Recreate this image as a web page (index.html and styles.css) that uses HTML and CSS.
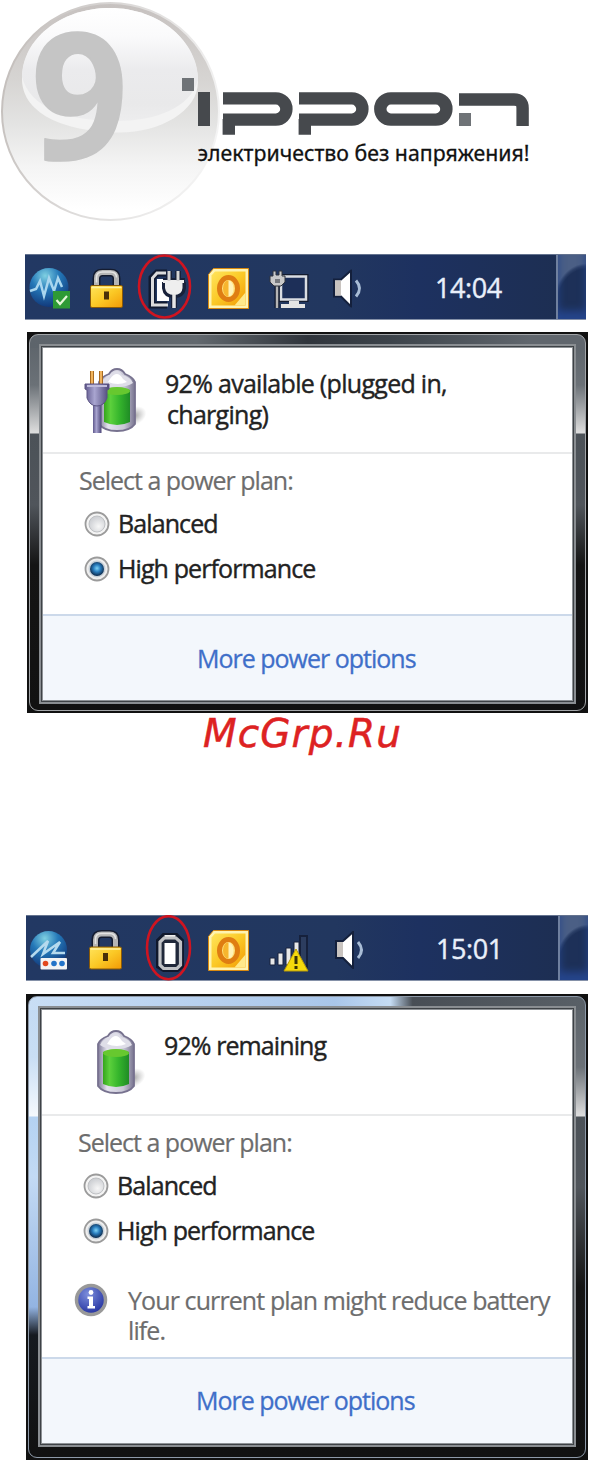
FILE: index.html
```
<!DOCTYPE html>
<html lang="en">
<head>
    <meta charset="UTF-8">
    <title>Ippon - Power plan</title>
    <link rel="stylesheet" href="styles.css">
</head>
<body>
    <!-- shared icons -->
    <svg class="sprites" width="0" height="0">
        <defs>
            <linearGradient id="gold" x1="0" y1="0" x2="1" y2="1">
                <stop offset="0" stop-color="#ffe45c"/>
                <stop offset="0.5" stop-color="#fbc926"/>
                <stop offset="1" stop-color="#f29a05"/>
            </linearGradient>
            <radialGradient id="globe" cx="0.4" cy="0.2" r="0.8">
                <stop offset="0" stop-color="#7fd0e2"/>
                <stop offset="0.45" stop-color="#2478b8"/>
                <stop offset="1" stop-color="#123a7c"/>
            </radialGradient>
            <linearGradient id="glass">
                <stop offset="0" stop-color="#7d7896"/>
                <stop offset="0.25" stop-color="#e4e3ee"/>
                <stop offset="0.7" stop-color="#c9c8d6"/>
                <stop offset="1" stop-color="#77738f"/>
            </linearGradient>
            <linearGradient id="green">
                <stop offset="0" stop-color="#35a51c"/>
                <stop offset="0.25" stop-color="#5cd03c"/>
                <stop offset="0.6" stop-color="#35b52c"/>
                <stop offset="1" stop-color="#1f8c25"/>
            </linearGradient>
            <linearGradient id="plug">
                <stop offset="0" stop-color="#5f588c"/>
                <stop offset="0.4" stop-color="#a9a5d0"/>
                <stop offset="1" stop-color="#4c4678"/>
            </linearGradient>
            <radialGradient id="shade">
                <stop offset="0" stop-color="#777" stop-opacity="0.7"/>
                <stop offset="1" stop-color="#999" stop-opacity="0"/>
            </radialGradient>
            <radialGradient id="dot" cx="0.5" cy="0.45" r="0.55">
                <stop offset="0" stop-color="#7fd3f5"/>
                <stop offset="0.45" stop-color="#2a7fc0"/>
                <stop offset="1" stop-color="#0b2748"/>
            </radialGradient>
            <radialGradient id="well" cx="0.6" cy="0.65" r="0.6">
                <stop offset="0" stop-color="#f7f7f7"/>
                <stop offset="1" stop-color="#cfd1d5"/>
            </radialGradient>
            <radialGradient id="blue" cx="0.4" cy="0.3" r="0.7">
                <stop offset="0" stop-color="#7d8fdc"/>
                <stop offset="1" stop-color="#2432a0"/>
            </radialGradient>
        </defs>
        <symbol id="lock" viewBox="0 0 36 42">
            <path d="M8 18V10Q8 4 14 4H22Q28 4 28 10V18" fill="none" stroke="#151c30" stroke-width="8"/>
            <path d="M8 18V10Q8 4 14 4H22Q28 4 28 10V18" fill="none" stroke="#b5b5b5" stroke-width="5"/>
            <path d="M8 14V9Q8 3.500 14 3.500H22Q28 3.500 28 9" fill="none" stroke="#e4e4e4" stroke-width="1.500"/>
            <rect x="2" y="17" width="32" height="22" rx="1.500" fill="url(#gold)" stroke="#8a5a08"/>
            <path d="M3 19H33" stroke="#fff0a0" stroke-width="1.500"/>
            <path d="M15.500 23H20.500V31H15.500Z" fill="#4a3108"/>
        </symbol>
        <symbol id="office" viewBox="0 0 42 42">
            <path d="M6 1H41V41H1V7Z" fill="#fff3b0" stroke="#d98a10"/>
            <path d="M7.500 4H38V38H4V8Z" fill="url(#gold)"/>
            <path d="M27 38L38 25V38Z" fill="#ffe98a"/>
            <ellipse cx="21" cy="21" rx="9" ry="11" fill="#ffe07a" stroke="#df7d12" stroke-width="5"/>
            <ellipse cx="20.500" cy="21" rx="5" ry="8" fill="#f7b52e"/>
            <path d="M21 13A5 8 0 0 1 21 29Z" fill="#fff2b8"/>
        </symbol>
        <symbol id="speaker" viewBox="0 0 36 38">
            <path d="M2 10H9L19 1V37L9 27H2Z" fill="#fff" stroke="#14203c" stroke-width="2"/>
            <path d="M3 11H9V26H3Z" fill="#c9c4c0"/>
            <path d="M24 11Q31 19 24 27" fill="none" stroke="#a9bdd6" stroke-width="3"/>
        </symbol>
        <symbol id="battery" viewBox="0 0 64 68">
            <ellipse cx="50" cy="50" rx="13" ry="9" fill="url(#shade)" transform="rotate(-25 50 50)"/>
            <path d="M15 16Q17 11 25 8Q28 3 33 3Q38 3 41 8Q49 11 51 16V58Q46 65 33 65Q20 65 15 58Z" fill="url(#glass)" stroke="#77728f" stroke-width="1.800"/>
            <path d="M17 17Q19 11 28 9Q30 5 33 5Q36 5 38 9Q47 11 49 17Q43 21 33 21Q22 21 17 17Z" fill="#dfdee8"/>
            <path d="M26 13Q33 3 39 13L43 16Q34 20 24 16Z" fill="#fff"/>
            <path d="M20 24Q33 19 46 24V56Q33 62 20 56Z" fill="url(#green)"/>
            <ellipse cx="33" cy="25" rx="13" ry="4" fill="#67c82f"/>
        </symbol>
        <symbol id="radio" viewBox="0 0 26 26">
            <circle cx="13" cy="13" r="11.500" fill="#f4f4f4" stroke="#9b9b9b" stroke-width="1.800"/>
            <circle cx="13" cy="13" r="8" fill="url(#well)" stroke="#bfc1c4"/>
        </symbol>
        <symbol id="radio-on" viewBox="0 0 26 26">
            <circle cx="13" cy="13" r="11.500" fill="#eee" stroke="#9b9b9b" stroke-width="1.800"/>
            <circle cx="13" cy="13" r="8.500" fill="#c7d0d8"/>
            <circle cx="13" cy="13" r="7" fill="url(#dot)"/>
        </symbol>
    </svg>

    <header class="header">
        <svg class="badge" viewBox="0 0 220 224">
            <defs>
                <linearGradient id="ball" x1="0" y1="0" x2="0" y2="1">
                    <stop offset="0" stop-color="#c6c1bf"/>
                    <stop offset="0.35" stop-color="#d6d4d2"/>
                    <stop offset="0.55" stop-color="#e3e3e2"/>
                    <stop offset="0.75" stop-color="#f4f4f4"/>
                    <stop offset="0.95" stop-color="#fff"/>
                </linearGradient>
                <linearGradient id="rim" x1="0" y1="0.3" x2="1" y2="0.6">
                    <stop offset="0" stop-color="#c3bebb"/>
                    <stop offset="0.5" stop-color="#dedcdb"/>
                    <stop offset="1" stop-color="#f4f4f4"/>
                </linearGradient>
                <linearGradient id="shine" x1="0" y1="0" x2="0" y2="1">
                    <stop offset="0" stop-color="#fff"/>
                    <stop offset="0.25" stop-color="#fafafb"/>
                    <stop offset="0.55" stop-color="#ebebed"/>
                    <stop offset="0.85" stop-color="#e9e9ea"/>
                    <stop offset="1" stop-color="#ededee"/>
                </linearGradient>
            </defs>
            <circle cx="110.500" cy="111.500" r="108.500" fill="url(#ball)" stroke="url(#rim)" stroke-width="2"/>
            <path d="M22 79C22 40 60 8 110 8S198 42 198 82C198 111 160 132.500 120 132.500C70 132.500 22 116 22 79Z" fill="#f3f3f3"/>
            <path d="M22 77C22 40 60 8 110 8S198 42 198 80C190 108 156 121 116 121C68 121 30 108 22 77Z" fill="url(#shine)"/>
            <text class="digit" x="31" y="160" textLength="97" lengthAdjust="spacingAndGlyphs">9</text>
        </svg>
        <svg class="logo" viewBox="180 74 352 98" role="img" aria-label="ippon">
            <rect x="182" y="78" width="12" height="13" fill="#6f7377"/>
            <rect x="198" y="92" width="12" height="34" fill="#46494d"/>
            <g fill="none" stroke="#46494d" stroke-width="12.400">
                <path d="M223 98.400H275.800A10.600 10.600 0 0 1 275.800 119.600H223M228.800 119V134.700"/>
                <path d="M299 98.400H351.800A10.600 10.600 0 0 1 351.800 119.600H299M304.800 119V134.700"/>
                <rect x="380.300" y="98.400" width="66.100" height="21.200" rx="10.600"/>
                <path d="M459 99.500H514Q522.600 99.500 522.600 108V126"/>
            </g>
            <rect x="459" y="113" width="12" height="13" fill="#6f7377"/>
            <text class="tagline" x="197.500" y="161" textLength="332" lengthAdjust="spacingAndGlyphs">электричество без напряжения!</text>
        </svg>
    </header>

    <div class="taskbar">
        <svg width="55" height="66" viewBox="0 0 55 66">
            <circle cx="24" cy="33.500" r="19.500" fill="url(#globe)"/>
            <path d="M5 37L11 35L15 27L19 42L24 24L29 37L33 24L37 33" fill="none" stroke="#a9d6ee" stroke-width="2.500"/>
            <rect x="28" y="37" width="17" height="17.500" fill="#2e9a35"/>
            <path d="M31.500 46L35 50L42 42" fill="none" stroke="#e6f7d8" stroke-width="2.200"/>
        </svg>
        <svg width="55" height="66"><use href="#lock" x="8.500" y="14.500" width="36" height="42"/></svg>
        <svg width="60" height="66" viewBox="110 0 60 66">
            <path d="M142 19H132L127 24V51H142" fill="none" stroke="#111a30" stroke-width="7"/>
            <path d="M143 19H132L127.500 24V51H143" fill="none" stroke="#dcdcdc" stroke-width="3"/>
            <path d="M132 25H144V47H132Z" fill="#fff"/>
            <path d="M144 17V27M153 17V27M138 27H160M140 28V34Q141 41 149 41Q157 41 158 34V28M149 40V54" fill="none" stroke="#18213a" stroke-width="6"/>
            <path d="M138 26H159V29H157.500V34Q157 41 149 41Q141 41 140 34V29H138Z" fill="#eee"/>
            <path d="M144 17V27M153 17V27" stroke="#d5d5d5" stroke-width="3"/>
            <path d="M149 40V54" stroke="#e6e6e6" stroke-width="3.500"/>
            <ellipse cx="139.500" cy="32.500" rx="25.500" ry="31" fill="none" stroke="#d01420" stroke-width="2.600"/>
        </svg>
        <svg width="65" height="66"><use href="#office" x="12.500" y="13.500" width="42" height="42"/></svg>
        <svg width="60" height="66" viewBox="235 0 60 66">
            <rect x="256" y="22.500" width="25" height="23" fill="#1c2d55" stroke="#131b2e" stroke-width="5"/>
            <rect x="256" y="22.500" width="25" height="23" fill="#1d2f58" stroke="#dadde2" stroke-width="2.500"/>
            <path d="M264 47H274V50H280V54H256V50H264Z" fill="#e4e4e4"/>
            <path d="M252 30V54" stroke="#10182c" stroke-width="5"/>
            <path d="M252 30V54" stroke="#b5b5b5" stroke-width="2.500"/>
            <path d="M245 22H248V17H251V21H254V17H257V22H260V28L256 32H249L245 28Z" fill="#c9c9c9" stroke="#30343c"/>
            <path d="M250 25H255V29H250Z" fill="#77797d"/>
        </svg>
        <svg width="60" height="66"><use href="#speaker" x="12" y="15.500" width="36" height="38"/></svg>
        <span class="clock">14:04</span>
        <span class="show-desktop"></span>
    </div>

    <div class="dialog charging">
        <div class="frame">
            <div class="content">
                <div class="status">
                    <svg width="64" height="68">
                        <use href="#battery" width="64" height="68"/>
                        <path d="M8 5V20M17 5V20" stroke="#a86a22" stroke-width="4"/>
                        <path d="M8 5V18M17 5V18" stroke="#f0b35c" stroke-width="2"/>
                        <path d="M9 38H17.500V67H9Z" fill="url(#plug)"/>
                        <path d="M1 18H25V23L23 24V32Q20 40 13 40Q6 40 3 32V24L1 23Z" fill="url(#plug)" stroke="#5a5382"/>
                        <path d="M3 20H23" stroke="#bfbbdc" stroke-width="2"/>
                    </svg>
                    <p class="level"><span>92% available (plugged in,</span><br><span class="second">charging)</span></p>
                </div>
                <div class="plans">
                    <p class="caption">Select a power plan:</p>
                    <div class="plan"><svg width="26" height="26"><use href="#radio"/></svg><span>Balanced</span></div>
                    <div class="plan"><svg width="26" height="26"><use href="#radio-on"/></svg><span>High performance</span></div>
                </div>
                <div class="footer"><a class="link">More power options</a></div>
            </div>
        </div>
    </div>

    <div class="watermark">McGrp.Ru</div>

    <div class="taskbar second-bar">
        <svg width="55" height="66" viewBox="0 0 55 66">
            <circle cx="22.500" cy="34.500" r="18.500" fill="url(#globe)"/>
            <path d="M5 42L22 26L17 39L34 27L27 38H39" fill="none" stroke="#b5daee" stroke-width="2.500"/>
            <rect x="14.500" y="43" width="26.500" height="11.500" rx="1" fill="#f4f4f4"/>
            <circle cx="19.500" cy="48.500" r="2.800" fill="#e2481e"/>
            <circle cx="28" cy="48.500" r="2.800" fill="#2474c8"/>
            <circle cx="36" cy="48.500" r="2.800" fill="#2474c8"/>
        </svg>
        <svg width="55" height="66"><use href="#lock" x="6.500" y="15" width="36" height="42"/></svg>
        <svg width="60" height="66" viewBox="110 0 60 66">
            <path d="M138 21H150L155 26V51L151 54H138L133 51V26Z" fill="#15203a" stroke="#10182c" stroke-width="6"/>
            <path d="M138.500 23V20H149.500V23" fill="#eee"/>
            <path d="M138 23H150L154.500 27V50L151 53.500H137.500L134 50V27Z" fill="#20283a" stroke="#bfc1c5" stroke-width="3.200"/>
            <path d="M138.500 28H149.500V49H138.500Z" fill="#fff"/>
            <ellipse cx="142.500" cy="32.700" rx="21.500" ry="31.500" fill="none" stroke="#d01420" stroke-width="2.600"/>
        </svg>
        <svg width="65" height="66"><use href="#office" x="11.500" y="14.500" width="42" height="42"/></svg>
        <svg width="60" height="66" viewBox="235 0 60 66">
            <path d="M274 21H281V52H274Z" fill="#2c3d5f" stroke="#16213c" stroke-width="2"/>
            <path d="M244 43H249V50H244ZM252 38H257V50H252ZM260 33H265V50H260ZM268 27H273V50H268Z" fill="#e8e8e8" stroke="#18223c"/>
            <path d="M270 34L282 56H258Z" fill="#f5d90c" stroke="#b89a08"/>
            <path d="M270 41V49M270 51V54" stroke="#3a3205" stroke-width="3"/>
        </svg>
        <svg width="60" height="66"><use href="#speaker" x="13" y="16" width="36" height="38"/></svg>
        <span class="clock">15:01</span>
        <span class="show-desktop"></span>
    </div>

    <div class="dialog discharging">
        <div class="frame">
            <div class="content">
                <div class="status">
                    <svg width="64" height="68"><use href="#battery" width="64" height="68"/></svg>
                    <p class="level"><span>92% remaining</span></p>
                </div>
                <div class="plans">
                    <p class="caption">Select a power plan:</p>
                    <div class="plan"><svg width="26" height="26"><use href="#radio"/></svg><span>Balanced</span></div>
                    <div class="plan"><svg width="26" height="26"><use href="#radio-on"/></svg><span>High performance</span></div>
                    <div class="note">
                        <svg width="34" height="34" viewBox="0 0 34 34">
                            <circle cx="17" cy="17" r="14.500" fill="url(#blue)" stroke="#999" stroke-width="3.500"/>
                            <circle cx="17" cy="9.500" r="2.400" fill="#fff"/>
                            <path d="M13.500 13.500H19V23H21V25.500H13.500V23H15V16H13.500Z" fill="#fff"/>
                        </svg>
                        <p>Your current plan might reduce battery<br>life.</p>
                    </div>
                </div>
                <div class="footer"><a class="link">More power options</a></div>
            </div>
        </div>
    </div>
</body>
</html>
```

FILE: styles.css
```
body {
    background: #fff;
    font-family: "Open Sans", "Noto Sans", sans-serif;
    margin: 0;
    padding: 0;
    width: 592px;
    height: 1464px;
    overflow: hidden;
}
p {
    margin: 0;
}
svg {
    display: block;
    flex: none;
}
.sprites {
    position: absolute;
}

/* logo */
.header {
    display: flex;
    height: 254px;
}
.badge {
    width: 220px;
    height: 224px;
    overflow: visible;
}
.digit {
    font: bold 176px "Open Sans", sans-serif;
    fill: #c5c5c5;
    stroke: #c5c5c5;
    stroke-width: 1.5px;
    stroke-linejoin: round;
}
.logo {
    width: 352px;
    height: 98px;
    margin: 74px 0 0 -40px;
    overflow: visible;
}
.tagline {
    font: 22px "Noto Sans", sans-serif;
    fill: #111;
    stroke: #111;
    stroke-width: 0.3px;
}

/* taskbar */
.taskbar {
    display: flex;
    align-items: center;
    width: 561px;
    height: 66px;
    margin-left: 25px;
    background: linear-gradient(90deg, #223863, #22375f 55%, #1d3160 70%, #1d2e50);
    box-shadow: inset 0 1px 0 #64738f, inset 0 -1px 0 #8591a8;
}
.second-bar {
    width: 562px;
    margin-left: 26px;
}
.clock {
    flex: 1;
    padding: 1px 0 0 55px;
    color: #e9effa;
    font-size: 27px;
    line-height: 66px;
    letter-spacing: -0.4px;
    -webkit-text-stroke: 0.4px #e9effa;
}
.show-desktop {
    width: 28px;
    height: 64px;
    border-left: 2px solid #6f809f;
    background: radial-gradient(ellipse 34px 46px at 100% 85%, #1d3058 88%, #2c4068 94%, #4b5f85);
    box-shadow: inset 0 -8px 8px #25458c;
}

/* dialog */
.dialog {
    box-sizing: border-box;
    width: 561px;
    height: 381px;
    margin: 12px 0 0 27px;
    padding: 2px;
    background: #111;
}
.frame {
    box-sizing: border-box;
    height: 100%;
    padding: 12px 12px 9px;
    border: 1px solid #a2a5a8;
    border-radius: 9px;
}
.charging .frame {
    background:
        linear-gradient(90deg, #5d646b, #62686e 30%, #2f343b 50%, #3c434a 65%, #60666d 90%) 0 0 / 100% 13px no-repeat,
        linear-gradient(#5b6269, #6b7177 50px, #dedede 98px, #4c5258 99px, #50555b 170px, #141414 230px, #111);
}
.content {
    box-sizing: border-box;
    display: flex;
    flex-direction: column;
    height: 100%;
    border: 1px solid #8d9195;
    background: #fff;
    box-shadow: 0 0 0 1px #3e4246, 0 0 0 3px #8a8e92;
}
.status {
    display: flex;
    box-sizing: border-box;
    height: 106px;
    padding: 18px 0 0 41px;
    border-bottom: 2px solid #e9eaeb;
}
.level {
    padding-left: 17px;
    padding-top: 2px;
    color: #222;
    font-size: 25px;
    line-height: 31px;
    letter-spacing: -0.7px;
    white-space: nowrap;
    -webkit-text-stroke: 0.4px #222;
}
.discharging .level {
    letter-spacing: -0.9px;
}
.second {
    padding-left: 2px;
}
.plans {
    flex: 1;
    padding: 9px 0 0 36px;
    font-size: 25px;
    letter-spacing: -0.9px;
}
.caption {
    margin-bottom: 3px;
    color: #6d6d6d;
    line-height: 34px;
    letter-spacing: -1px;
    -webkit-text-stroke: 0.2px #6d6d6d;
}
.plan {
    display: flex;
    align-items: center;
    height: 45px;
    padding-left: 5px;
    gap: 8px;
    color: #222;
    -webkit-text-stroke: 0.4px #222;
}
.plan svg {
    margin-top: 2px;
}
.footer {
    box-sizing: border-box;
    height: 86px;
    border-top: 2px solid #ccd9ea;
    background: #f3f7fc;
}
.link {
    display: block;
    padding-left: 154px;
    color: #3f6fc9;
    font-size: 25px;
    line-height: 84px;
    letter-spacing: -1px;
    -webkit-text-stroke: 0.3px #3f6fc9;
}

.watermark {
    height: 200px;
    padding: 2px 0 0 203px;
    color: #d22;
    font: italic 39px/38px "DejaVu Sans", sans-serif;
    letter-spacing: 1.1px;
    -webkit-text-stroke: 0.5px #d22;
}

.discharging {
    width: 562px;
    height: 466px;
    margin: 13px 0 0 26px;
}
.discharging .frame {
    padding-bottom: 13px;
    border-color: #8d99a8;
    background:
        linear-gradient(90deg, #c9def5, #a9c6ea 55%, #c5dcf4 65%, #484e55 69%, #596067) 0 0 / 100% 13px no-repeat,
        linear-gradient(#c2d9f3, #c9def4 60px, #f5f9fd 119px, #b4d2f2 120px, #c3daf4 180px, #93b4e2 310px, #161a20 338px, #111) 0 0 / 14px 100% no-repeat,
        linear-gradient(#5b6269, #6b7177 70px, #dedede 119px, #4c5258 120px, #50555b 190px, #141414 290px, #111);
}
.discharging .link {
    line-height: 83px;
}
.note {
    display: flex;
    gap: 20px;
    margin: 33px 0 0 -4px;
    color: #6d6d6d;
    line-height: 30px;
    white-space: nowrap;
    -webkit-text-stroke: 0.2px #6d6d6d;
}
.note svg {
    margin-top: -2px;
}
```
